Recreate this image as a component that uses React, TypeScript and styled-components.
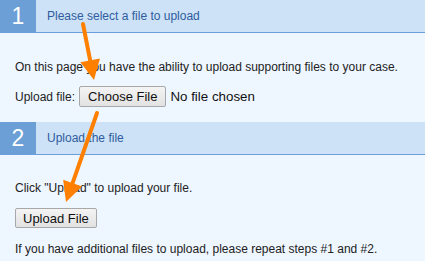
import React from "react";
import styled, { createGlobalStyle } from "styled-components";

const GlobalStyle = createGlobalStyle`
    html, body {
        margin: 0;
        padding: 0;
        background: #eef6ff;
    }
    body {
        font-family: "Liberation Sans", Arial, sans-serif;
        font-size: 12px;
        color: #222;
    }
`;

const Page = styled.div`
    position: relative;
    width: 425px;
    height: 261px;
    overflow: hidden;
    background: #eef6ff;
`;

const StepHeader = styled.div`
    display: flex;
    align-items: stretch;
    height: 32px;
    background: #cde2f7;
    border-bottom: 1px solid #6b9fdc;
`;

const StepNumber = styled.div`
    width: 36px;
    display: flex;
    align-items: center;
    justify-content: center;
    background: #6b9fd6;
    color: #fff;
    font-size: 23px;
`;

const StepTitle = styled.div`
    display: flex;
    align-items: center;
    padding-left: 11px;
    color: #2e5c9e;
    font-size: 12px;
`;

const StepBody = styled.div<{ $pad: string }>`
    padding: ${p => p.$pad};
    display: flex;
    flex-direction: column;
`;

const Line = styled.div<{ $mt?: number }>`
    margin-top: ${p => p.$mt ?? 0}px;
    line-height: 15px;
    white-space: nowrap;
`;

const FileRow = styled.div`
    display: flex;
    align-items: center;
    gap: 4px;
    margin-top: 11px;
    white-space: nowrap;
`;

const NoFile = styled.span`
    font-size: 13.33px;
    color: #111;
`;

const Button = styled.button`
    font-family: "Liberation Sans", Arial, sans-serif;
    font-size: 13px;
    color: #111;
    height: 21px;
    padding: 0 8px;
    border: 1px solid #a8a8a8;
    border-radius: 2px;
    background: linear-gradient(#f4f4f4, #e2e2e2);
`;

const UploadButton = styled(Button)`
    align-self: flex-start;
    height: 20px;
    margin-top: 12px;
    padding: 0 7px;
`;

const Arrows = styled.svg`
    position: absolute;
    left: 0;
    top: 0;
    pointer-events: none;
`;

const Arrow: React.FC<{ x1: number; y1: number; x2: number; y2: number }> = ({ x1, y1, x2, y2 }) => {
    const dx = x2 - x1;
    const dy = y2 - y1;
    const len = Math.hypot(dx, dy);
    const ux = dx / len;
    const uy = dy / len;
    const head = 20;
    const half = 10;
    const bx = x2 - ux * head;
    const by = y2 - uy * head;
    return (
        <g fill="#ff8000" stroke="#ff8000">
            <line x1={x1} y1={y1} x2={bx} y2={by} strokeWidth={4} strokeLinecap="round" />
            <polygon
                stroke="none"
                points={`${x2},${y2} ${bx - uy * half},${by + ux * half} ${bx + uy * half},${by - ux * half}`}
            />
        </g>
    );
};

export default function App() {
    return (
        <Page>
            <GlobalStyle />
            <StepHeader>
                <StepNumber>1</StepNumber>
                <StepTitle>Please select a file to upload</StepTitle>
            </StepHeader>
            <StepBody $pad="27px 15px 15px">
                <Line>On this page you have the ability to upload supporting files to your case.</Line>
                <FileRow>
                    Upload file:
                    <Button>Choose File</Button>
                    <NoFile>No file chosen</NoFile>
                </FileRow>
            </StepBody>
            <StepHeader>
                <StepNumber>2</StepNumber>
                <StepTitle>Upload the file</StepTitle>
            </StepHeader>
            <StepBody $pad="26px 15px 0">
                <Line>Click "Upload" to upload your file.</Line>
                <UploadButton>Upload File</UploadButton>
                <Line $mt={14}>If you have additional files to upload, please repeat steps #1 and #2.</Line>
            </StepBody>
            <Arrows width={425} height={261}>
                <Arrow x1={83} y1={24} x2={94} y2={80} />
                <Arrow x1={97} y1={113} x2={66} y2={202} />
            </Arrows>
        </Page>
    );
}
